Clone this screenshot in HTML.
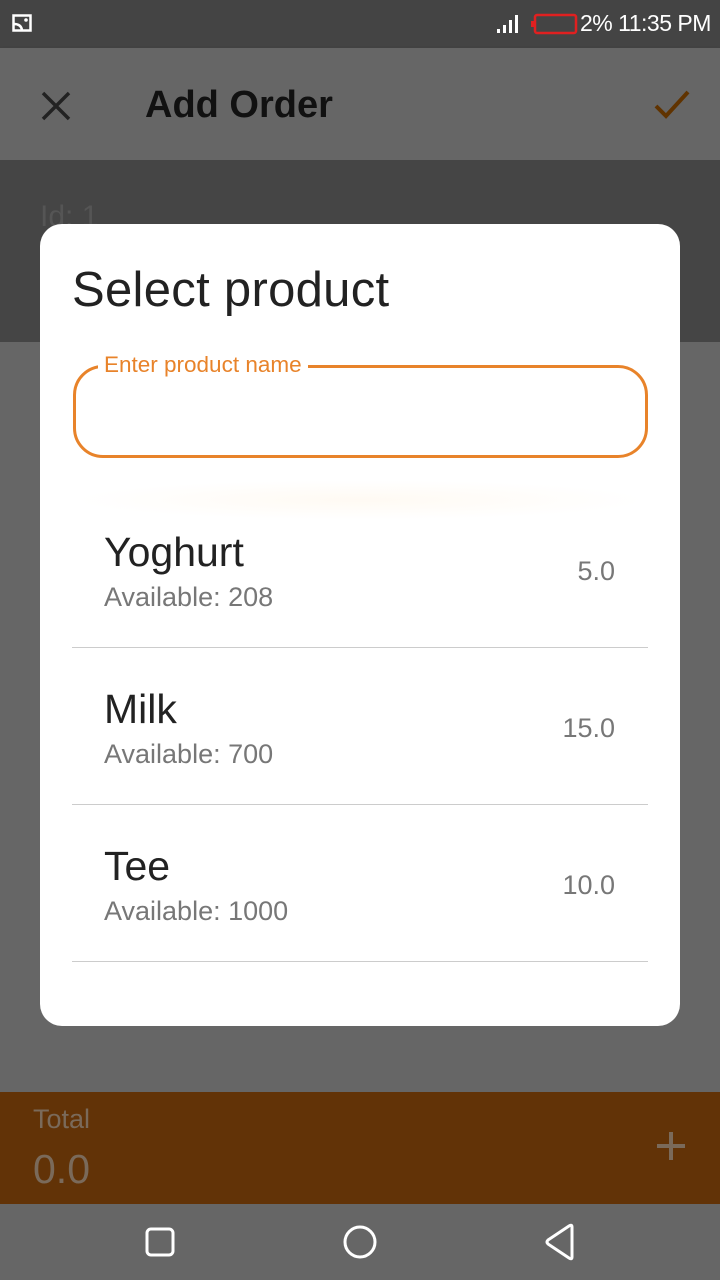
<!DOCTYPE html>
<html><head><meta charset="utf-8"><style>
*{margin:0;padding:0;box-sizing:border-box}
body{width:720px;height:1280px;overflow:hidden;position:relative;background:#666;font-family:"Liberation Sans",Roboto,sans-serif}
.a{position:absolute}
</style></head><body>
<div class="a" style="left:0;top:0;width:720px;height:48px;background:#444"></div>
<svg class="a" style="left:12px;top:14px" width="22" height="20" viewBox="0 0 22 20"><rect x="1.5" y="1.5" width="17" height="15" fill="none" stroke="#fff" stroke-width="2.5"/><path d="M2 10 Q9 10 10 16" fill="none" stroke="#fff" stroke-width="2.5"/><circle cx="14" cy="6" r="1.8" fill="#fff"/></svg>
<svg class="a" style="left:496px;top:14px" width="26" height="20"><rect x="1" y="15" width="3" height="4" fill="#fff"/><rect x="7" y="11" width="3" height="8" fill="#fff"/><rect x="13" y="6" width="3" height="13" fill="#fff"/><rect x="19" y="1" width="3" height="18" fill="#fff"/></svg>
<svg class="a" style="left:530px;top:13px" width="50" height="22"><rect x="1" y="8" width="3" height="6" fill="#e02020"/><rect x="5" y="2" width="41" height="18" rx="2" fill="none" stroke="#e02020" stroke-width="2.5"/></svg>
<div class="a" style="left:580px;top:10px;color:#fff;font-size:23px;letter-spacing:-0.5px">2% 11:35 PM</div>

<div class="a" style="left:0;top:48px;width:720px;height:112px;background:#666;box-shadow:0 2px 4px rgba(0,0,0,.3)"></div>
<svg class="a" style="left:40px;top:90px" width="32" height="32"><path d="M3 3 L29 29 M29 3 L3 29" stroke="#222" stroke-width="3.5"/></svg>
<div class="a" style="left:145px;top:84px;color:#111;font-size:38px;font-weight:bold">Add Order</div>
<svg class="a" style="left:652px;top:86px" width="40" height="36"><path d="M4 20 L14 30 L36 6" fill="none" stroke="#603300" stroke-width="4"/></svg>

<div class="a" style="left:0;top:160px;width:720px;height:182px;background:#454545"></div>
<div class="a" style="left:40px;top:200px;color:#555;font-size:30px">Id: 1</div>

<div class="a" style="left:0;top:1092px;width:720px;height:112px;background:#623307"></div>
<div class="a" style="left:33px;top:1104px;color:#7a6a5a;font-size:27px">Total</div>
<div class="a" style="left:33px;top:1146px;color:#7a6a5a;font-size:41px">0.0</div>
<svg class="a" style="left:655px;top:1130px" width="32" height="32"><path d="M16 2 V30 M2 16 H30" stroke="#7a6a5a" stroke-width="4"/></svg>

<svg class="a" style="left:140px;top:1222px" width="40" height="40"><rect x="7" y="7" width="26" height="26" rx="4" fill="none" stroke="#fff" stroke-width="3"/></svg>
<svg class="a" style="left:340px;top:1222px" width="40" height="40"><circle cx="20" cy="20" r="15" fill="none" stroke="#fff" stroke-width="3"/></svg>
<svg class="a" style="left:540px;top:1222px" width="40" height="40"><path d="M32 5 L32 35 Q32 38 29 36 L8 22 Q6 20 8 18 L29 4 Q32 2 32 5 Z" fill="none" stroke="#fff" stroke-width="3"/></svg>

<div class="a" style="left:40px;top:224px;width:640px;height:802px;background:#fff;border-radius:22px"></div>
<div class="a" style="left:72px;top:262px;color:#222;font-size:49px;letter-spacing:0.3px">Select product</div>
<div class="a" style="left:73px;top:365px;width:575px;height:93px;border:3px solid #e8832a;border-radius:30px"></div>
<div class="a" style="left:98px;top:352px;background:#fff;padding:0 6px;color:#e8832a;font-size:22.5px">Enter product name</div>
<div class="a" style="left:72px;top:480px;width:576px;height:40px;background:radial-gradient(ellipse at 50% 50%,#fffaf3,#fff 70%)"></div>

<div class="a" style="left:104px;top:529px;color:#222;font-size:41px">Yoghurt</div>
<div class="a" style="left:104px;top:582px;color:#777;font-size:27px">Available: 208</div>
<div class="a" style="right:105px;top:556px;color:#777;font-size:27px">5.0</div>
<div class="a" style="left:72px;top:647px;width:576px;height:1px;background:#ccc"></div>

<div class="a" style="left:104px;top:686px;color:#222;font-size:41px">Milk</div>
<div class="a" style="left:104px;top:739px;color:#777;font-size:27px">Available: 700</div>
<div class="a" style="right:105px;top:713px;color:#777;font-size:27px">15.0</div>
<div class="a" style="left:72px;top:804px;width:576px;height:1px;background:#ccc"></div>

<div class="a" style="left:104px;top:843px;color:#222;font-size:41px">Tee</div>
<div class="a" style="left:104px;top:896px;color:#777;font-size:27px">Available: 1000</div>
<div class="a" style="right:105px;top:870px;color:#777;font-size:27px">10.0</div>
<div class="a" style="left:72px;top:961px;width:576px;height:1px;background:#ccc"></div>
</body></html>
